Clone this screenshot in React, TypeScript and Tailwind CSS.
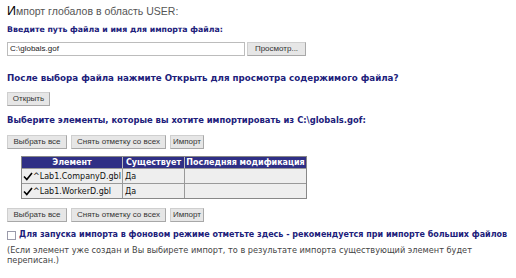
import React from "react";

const Btn = ({ children, w }: { children: React.ReactNode; w: string }) => (
  <button
    className={`h-[14px] ${w} border border-[#cfcfcf] border-b-[#a8a8a8] border-r-[#a8a8a8] bg-[#e6e6e6] font-['Liberation_Sans',sans-serif] text-[8px] leading-none text-[#333]`}
  >
    {children}
  </button>
);

const Buttons = () => (
  <div className="flex h-[14px] gap-[4px]">
    <Btn w="w-[60px]">Выбрать все</Btn>
    <Btn w="w-[95px]">Снять отметку со всех</Btn>
    <Btn w="w-[34px]">Импорт</Btn>
  </div>
);

const rows = ["^Lab1.CompanyD.gbl", "^Lab1.WorkerD.gbl"];

export default function App() {
  return (
    <div className="h-[278px] w-[516px] overflow-hidden bg-white pl-[7px] font-['DejaVu_Sans',sans-serif]">
      <div className="h-[18px] pt-[4px] font-['Liberation_Sans',sans-serif] text-[10.5px] leading-[14px] text-[#555]">
        <span className="text-[12.5px] leading-[14px] text-black">И</span>мпорт глобалов в область USER:
      </div>

      <div className="mt-[7px] text-[7.8px] font-bold leading-[10px] text-[#20207a]">
        Введите путь файла и имя для импорта файла:
      </div>

      <div className="mt-[7px] flex h-[14px] items-center gap-[2px]">
        <div className="flex h-[14px] w-[238px] items-center border border-[#bcbcbc] bg-white pl-[2px] font-['Liberation_Sans',sans-serif] text-[8px] text-[#222]">
          C:\globals.gof
        </div>
        <Btn w="w-[59px]">Просмотр...</Btn>
      </div>

      <div className="mt-[17px] text-[8.7px] font-bold leading-[10px] text-[#20207a]">
        После выбора файла нажмите Открыть для просмотра содержимого файла?
      </div>

      <div className="mt-[9px] flex h-[14px]">
        <Btn w="w-[43px]">Открыть</Btn>
      </div>

      <div className="mt-[9px] text-[8.4px] font-bold leading-[10px] text-[#20207a]">
        Выберите элементы, которые вы хотите импортировать из C:\globals.gof:
      </div>

      <div className="mt-[10px]">
        <Buttons />
      </div>

      <div className="ml-[14px] mt-[7px] w-[286px] border border-[#888]">
        <div className="flex h-[11px] bg-[#2f2f85] text-[8px] font-bold leading-[11px] text-white">
          <div className="w-[101px] border-r border-[#bbb] text-center">Элемент</div>
          <div className="w-[62px] border-r border-[#bbb] text-center">Существует</div>
          <div className="flex-1 text-center">Последняя модификация</div>
        </div>
        {rows.map((r) => (
          <div key={r} className="flex h-[15px] border-t border-[#999] bg-[#eeeeee] text-[8px] leading-[15px] text-[#111]">
            <div className="flex w-[101px] items-center border-r border-[#999] pl-[1px]">
              <svg width="10" height="9" viewBox="0 0 10 9" className="shrink-0">
                <path d="M1 4.5 L3.8 7.5 L9 1" fill="none" stroke="#000" strokeWidth="1.6" />
              </svg>
              <span>{r}</span>
            </div>
            <div className="w-[62px] border-r border-[#999] pl-[2px]">Да</div>
            <div className="flex-1" />
          </div>
        ))}
      </div>

      <div className="mt-[9px]">
        <Buttons />
      </div>

      <div className="mt-[8px] flex h-[10px] items-center gap-[3px]">
        <div className="h-[9px] w-[9px] shrink-0 border border-[#9a9aaa] bg-white" />
        <span className="whitespace-nowrap text-[8px] font-bold leading-[10px] text-[#20207a]">
          Для запуска импорта в фоновом режиме отметьте здесь - рекомендуется при импорте больших файлов
        </span>
      </div>

      <div className="mt-[5px] w-[480px] text-[8.2px] leading-[10px] text-[#444]">
        (Если элемент уже создан и Вы выбирете импорт, то в результате импорта существующий элемент будет переписан.)
      </div>
    </div>
  );
}
